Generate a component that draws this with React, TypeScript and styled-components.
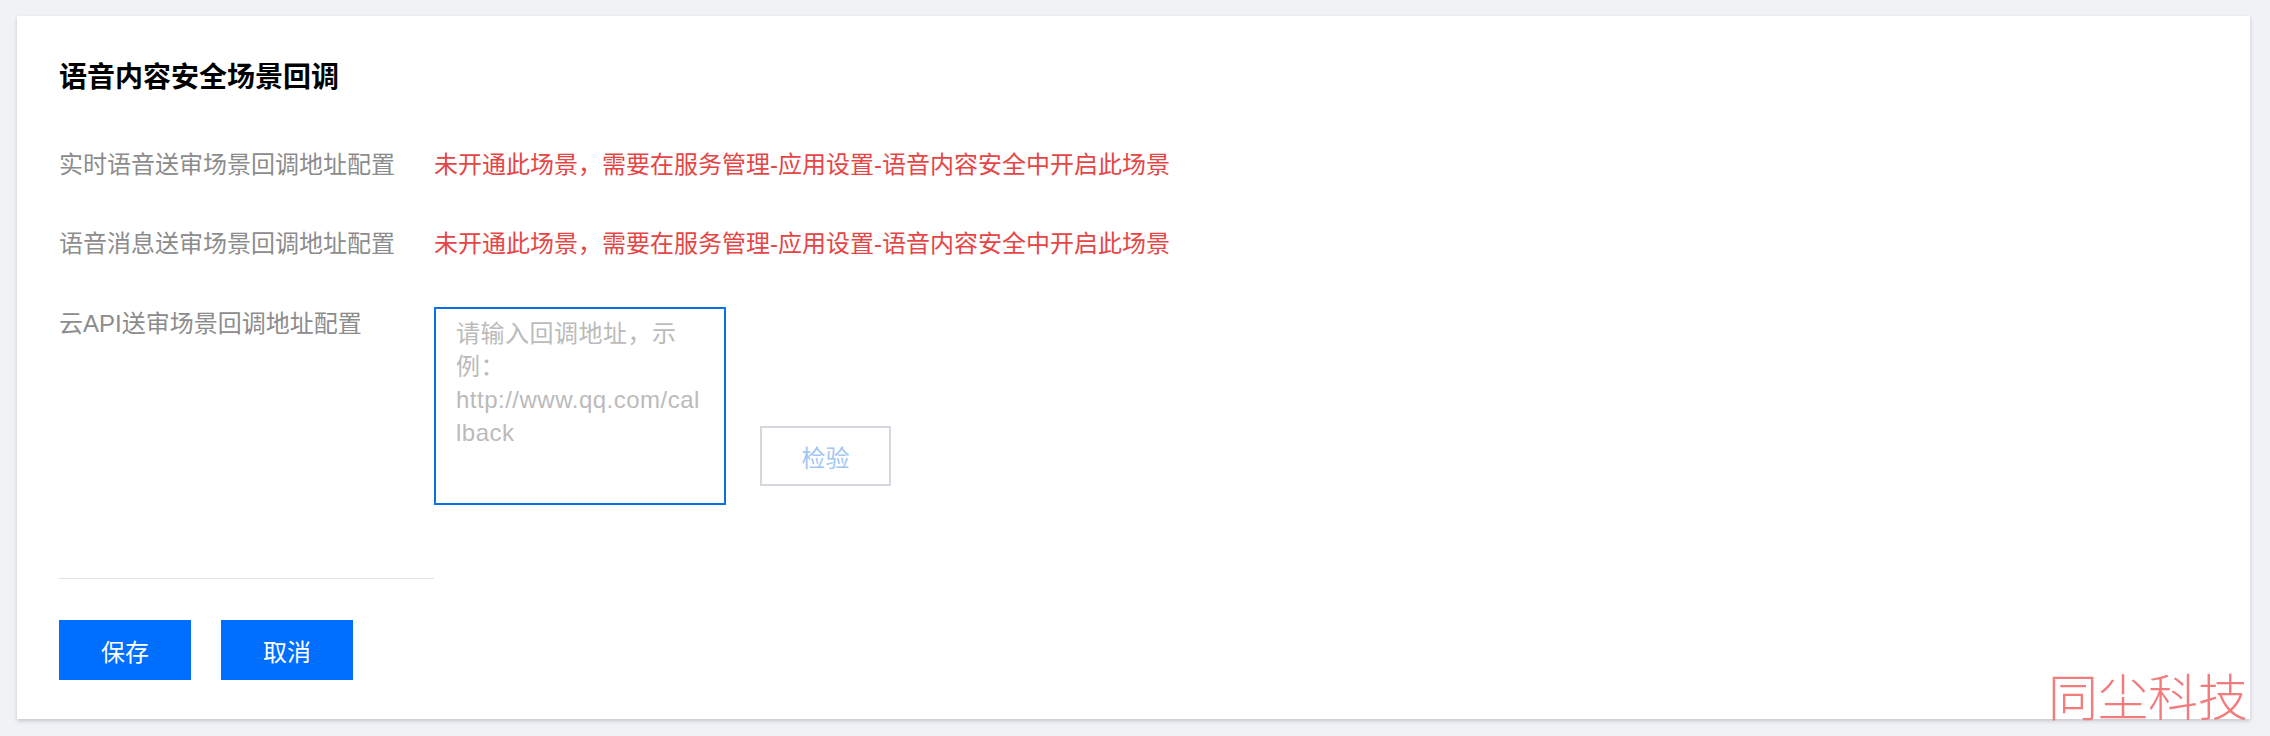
import styled, { createGlobalStyle } from "styled-components";

const GlobalStyle = createGlobalStyle`
  html, body {
    margin: 0;
    padding: 0;
    background: #f1f2f6;
  }
  body {
    font-family: "Liberation Sans", "Noto Sans CJK SC", sans-serif;
  }
`;

const NOT_OPEN = "未开通此场景，需要在服务管理-应用设置-语音内容安全中开启此场景";

export default function App() {
  return (
    <Page>
      <GlobalStyle />
      <Card>
        <Title>语音内容安全场景回调</Title>
        <Form>
          <Row $gap={45}>
            <Label>实时语音送审场景回调地址配置</Label>
            <Warning>{NOT_OPEN}</Warning>
          </Row>
          <Row $gap={46}>
            <Label>语音消息送审场景回调地址配置</Label>
            <Warning>{NOT_OPEN}</Warning>
          </Row>
          <Row $gap={0}>
            <Label>云API送审场景回调地址配置</Label>
            <Field>
              <TextArea placeholder="请输入回调地址，示例：http://www.qq.com/callback" />
              <CheckButton disabled>检验</CheckButton>
            </Field>
          </Row>
        </Form>
        <Divider />
        <Actions>
          <PrimaryButton>保存</PrimaryButton>
          <PrimaryButton>取消</PrimaryButton>
        </Actions>
        <Watermark>同尘科技</Watermark>
      </Card>
    </Page>
  );
}

const Page = styled.div`
  min-height: 100vh;
  box-sizing: border-box;
  padding: 16px 20px 17px 17px;
`;

const Card = styled.div`
  position: relative;
  background: #fff;
  box-shadow: 0 2px 4px rgba(40, 44, 60, 0.22);
  padding: 42px 42px 39px 42px;
`;

const Title = styled.h2`
  margin: 0;
  font-size: 28px;
  line-height: 40px;
  font-weight: 700;
  color: #000;
`;

const Form = styled.div`
  display: flex;
  flex-direction: column;
  margin-top: 50px;
`;

const Row = styled.div<{ $gap: number }>`
  display: flex;
  align-items: flex-start;
  margin-bottom: ${(p) => p.$gap}px;
`;

const Label = styled.div`
  width: 375px;
  flex-shrink: 0;
  font-size: 24px;
  line-height: 34px;
  color: #8c8c8c;
`;

const Warning = styled.div`
  font-size: 24px;
  line-height: 34px;
  color: #e54545;
`;

const Field = styled.div`
  display: flex;
  align-items: flex-end;
`;

const TextArea = styled.textarea`
  width: 292px;
  height: 198px;
  box-sizing: border-box;
  border: 2px solid #0d6fe6;
  border-radius: 0;
  padding: 8px 20px;
  margin: 0;
  font-family: "Liberation Sans", "Noto Sans CJK SC", sans-serif;
  font-size: 24px;
  line-height: 33px;
  letter-spacing: 0.5px;
  color: #333;
  resize: none;
  outline: none;

  &::placeholder {
    color: #bbb;
  }
`;

const CheckButton = styled.button`
  width: 131px;
  height: 60px;
  margin: 0 0 19px 34px;
  box-sizing: border-box;
  background: #fff;
  border: 2px solid #d6d6dc;
  font-family: inherit;
  font-size: 24px;
  color: #a3c6f3;
  cursor: not-allowed;
`;

const Divider = styled.div`
  width: 375px;
  height: 1px;
  margin-top: 73px;
  background: #e2e2e2;
`;

const Actions = styled.div`
  display: flex;
  gap: 30px;
  margin-top: 41px;
`;

const PrimaryButton = styled.button`
  width: 132px;
  height: 60px;
  border: none;
  background: #006eff;
  color: #fff;
  font-family: inherit;
  font-size: 24px;
  cursor: pointer;
`;

const Watermark = styled.div`
  position: absolute;
  right: 2px;
  bottom: 0;
  font-family: "Noto Sans CJK SC", sans-serif;
  font-weight: 300;
  font-size: 50px;
  line-height: 50px;
  color: #f27c7c;
  pointer-events: none;
`;
